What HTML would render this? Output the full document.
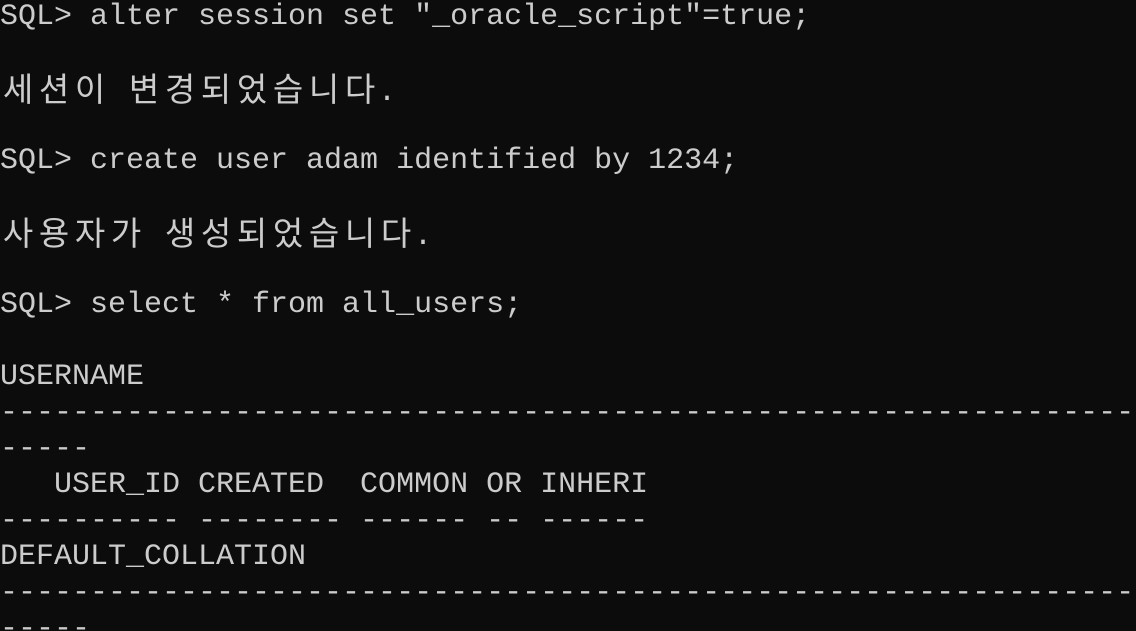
<!DOCTYPE html>
<html><head><meta charset="utf-8"><style>
html,body{margin:0;padding:0;background:#0c0c0c;width:1136px;height:631px;overflow:hidden}
#t{margin-top:-1px;font-family:"Liberation Mono","Noto Sans CJK KR",monospace;font-size:30px;line-height:36px;color:#cccccc;white-space:pre;letter-spacing:0}
.k{display:inline-block;width:36px;text-align:center;font-family:"Noto Sans CJK KR","NanumGothic",sans-serif;font-size:33px;line-height:0;vertical-align:baseline;position:relative;top:1px}
.l{height:36px;overflow:visible}
.kl{position:relative;top:4px}
</style></head><body><div id="t"><div class="l">SQL&gt; alter session set "_oracle_script"=true;</div><div class="l"></div><div class="l kl"><span class="k">세</span><span class="k">션</span><span class="k">이</span> <span class="k">변</span><span class="k">경</span><span class="k">되</span><span class="k">었</span><span class="k">습</span><span class="k">니</span><span class="k">다</span>.</div><div class="l"></div><div class="l">SQL&gt; create user adam identified by 1234;</div><div class="l"></div><div class="l kl"><span class="k">사</span><span class="k">용</span><span class="k">자</span><span class="k">가</span> <span class="k">생</span><span class="k">성</span><span class="k">되</span><span class="k">었</span><span class="k">습</span><span class="k">니</span><span class="k">다</span>.</div><div class="l"></div><div class="l">SQL&gt; select * from all_users;</div><div class="l"></div><div class="l">USERNAME</div><div class="l">---------------------------------------------------------------</div><div class="l">-----</div><div class="l">   USER_ID CREATED  COMMON OR INHERI</div><div class="l">---------- -------- ------ -- ------</div><div class="l">DEFAULT_COLLATION</div><div class="l">---------------------------------------------------------------</div><div class="l">-----</div></div></body></html>
